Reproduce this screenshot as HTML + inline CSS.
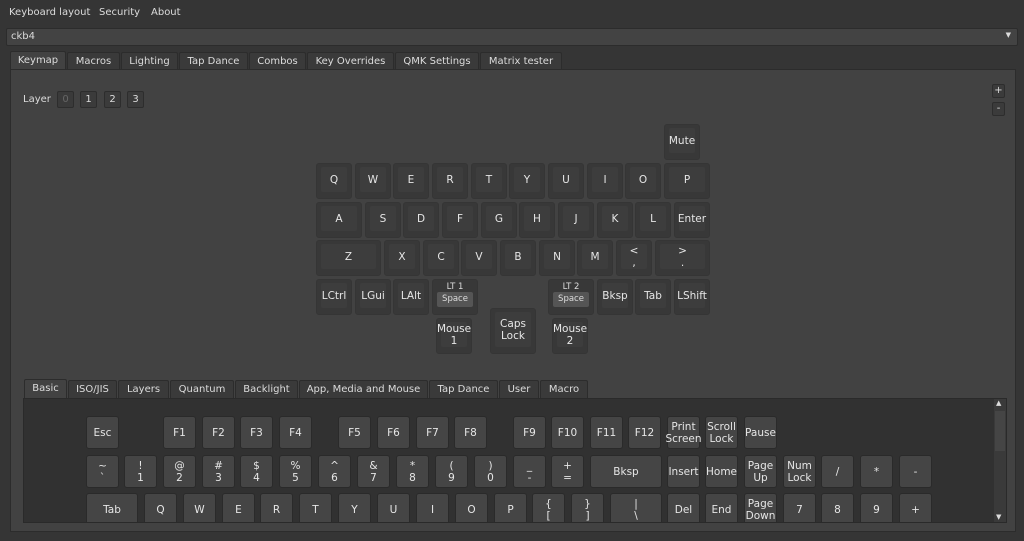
<!DOCTYPE html>
<html><head><meta charset="utf-8"><style>
*{box-sizing:border-box;margin:0;padding:0}
body{width:1024px;height:541px;background:#353535;font-family:"DejaVu Sans","Liberation Sans",sans-serif;font-size:10px;color:#dcdcdc;position:relative;overflow:hidden}
.a{position:absolute}
.menu span{position:absolute;top:7px}
.combo{left:6px;top:28px;width:1012px;height:18px;background:#434343;border:1px solid #2c2c2c;border-radius:2px;padding:2px 4px}
.tab{position:absolute;height:18px;border:1px solid #2c2c2c;border-bottom:none;background:#3a3a3a;text-align:center;line-height:17px;border-radius:2px 2px 0 0}
.tab.s{background:#424242;height:19px}
.panel{left:10px;top:69px;width:1006px;height:463px;background:#424242;border:1px solid #2c2c2c}
.k{position:absolute;background:#383838;border:1px solid #353535;border-radius:3px}
.k i{position:absolute;left:4px;right:4px;top:3px;bottom:6px;background:#3d3d3d;border-radius:2px;font-style:normal;display:flex;align-items:center;justify-content:center;text-align:center;line-height:12px;font-size:10.5px;color:#e6e6e6}
.k b{position:absolute;left:4px;right:4px;top:2px;font-weight:normal;text-align:center;font-size:8.5px}
.k u{position:absolute;left:4px;right:4px;bottom:7px;height:15px;background:#555;border-radius:2px;text-decoration:none;text-align:center;font-size:8.5px;line-height:15px}
.lb{position:absolute;top:91px;width:17px;height:17px;border:1px solid #2d2d2d;background:#3b3b3b;border-radius:2px;text-align:center;line-height:15px;font-size:10px}
.c{position:absolute;width:33px;height:33px;background:#454545;border:1px solid #2a2a2a;border-radius:3px;display:flex;align-items:center;justify-content:center;text-align:center;line-height:12px;font-size:10.5px;color:#e6e6e6}
</style></head><body>
<div class="menu"><span style="left:9px">Keyboard layout</span><span style="left:99px">Security</span><span style="left:151px">About</span></div>
<div class="a combo">ckb4<span class="a" style="right:6px;top:2px;font-size:7px">▼</span></div>
<div class="tab s" style="left:10px;top:51px;width:56px">Keymap</div>
<div class="tab" style="left:67px;top:52px;width:53px">Macros</div>
<div class="tab" style="left:121px;top:52px;width:57px">Lighting</div>
<div class="tab" style="left:179px;top:52px;width:69px">Tap Dance</div>
<div class="tab" style="left:249px;top:52px;width:57px">Combos</div>
<div class="tab" style="left:307px;top:52px;width:87px">Key Overrides</div>
<div class="tab" style="left:395px;top:52px;width:84px">QMK Settings</div>
<div class="tab" style="left:480px;top:52px;width:82px">Matrix tester</div>
<div class="a panel"></div>
<span class="a" style="left:23px;top:94px">Layer</span>
<div class="lb" style="left:57px;color:#666;background:#3a3a3a">0</div>
<div class="lb" style="left:80px">1</div>
<div class="lb" style="left:104px">2</div>
<div class="lb" style="left:127px">3</div>
<div class="lb" style="left:992px;top:84px;width:13px;height:14px;line-height:12px">+</div>
<div class="lb" style="left:992px;top:102px;width:13px;height:14px;line-height:12px">-</div>

<div class="k" style="left:664px;top:124px;width:36px;height:36px"><i>Mute</i></div>
<div class="k" style="left:316px;top:163px;width:36px;height:36px"><i>Q</i></div>
<div class="k" style="left:355px;top:163px;width:36px;height:36px"><i>W</i></div>
<div class="k" style="left:393px;top:163px;width:36px;height:36px"><i>E</i></div>
<div class="k" style="left:432px;top:163px;width:36px;height:36px"><i>R</i></div>
<div class="k" style="left:471px;top:163px;width:36px;height:36px"><i>T</i></div>
<div class="k" style="left:509px;top:163px;width:36px;height:36px"><i>Y</i></div>
<div class="k" style="left:548px;top:163px;width:36px;height:36px"><i>U</i></div>
<div class="k" style="left:587px;top:163px;width:36px;height:36px"><i>I</i></div>
<div class="k" style="left:625px;top:163px;width:36px;height:36px"><i>O</i></div>
<div class="k" style="left:664px;top:163px;width:46px;height:36px"><i>P</i></div>
<div class="k" style="left:316px;top:202px;width:46px;height:36px"><i>A</i></div>
<div class="k" style="left:365px;top:202px;width:36px;height:36px"><i>S</i></div>
<div class="k" style="left:403px;top:202px;width:36px;height:36px"><i>D</i></div>
<div class="k" style="left:442px;top:202px;width:36px;height:36px"><i>F</i></div>
<div class="k" style="left:481px;top:202px;width:36px;height:36px"><i>G</i></div>
<div class="k" style="left:519px;top:202px;width:36px;height:36px"><i>H</i></div>
<div class="k" style="left:558px;top:202px;width:36px;height:36px"><i>J</i></div>
<div class="k" style="left:597px;top:202px;width:36px;height:36px"><i>K</i></div>
<div class="k" style="left:635px;top:202px;width:36px;height:36px"><i>L</i></div>
<div class="k" style="left:674px;top:202px;width:36px;height:36px"><i>Enter</i></div>
<div class="k" style="left:316px;top:240px;width:65px;height:36px"><i>Z</i></div>
<div class="k" style="left:384px;top:240px;width:36px;height:36px"><i>X</i></div>
<div class="k" style="left:423px;top:240px;width:36px;height:36px"><i>C</i></div>
<div class="k" style="left:461px;top:240px;width:36px;height:36px"><i>V</i></div>
<div class="k" style="left:500px;top:240px;width:36px;height:36px"><i>B</i></div>
<div class="k" style="left:539px;top:240px;width:36px;height:36px"><i>N</i></div>
<div class="k" style="left:577px;top:240px;width:36px;height:36px"><i>M</i></div>
<div class="k" style="left:616px;top:240px;width:36px;height:36px"><i>&lt;<br>,</i></div>
<div class="k" style="left:655px;top:240px;width:55px;height:36px"><i>&gt;<br>.</i></div>
<div class="k" style="left:316px;top:279px;width:36px;height:36px"><i>LCtrl</i></div>
<div class="k" style="left:355px;top:279px;width:36px;height:36px"><i>LGui</i></div>
<div class="k" style="left:393px;top:279px;width:36px;height:36px"><i>LAlt</i></div>
<div class="k" style="left:432px;top:279px;width:46px;height:36px"><b>LT 1</b><u>Space</u></div>
<div class="k" style="left:548px;top:279px;width:46px;height:36px"><b>LT 2</b><u>Space</u></div>
<div class="k" style="left:597px;top:279px;width:36px;height:36px"><i>Bksp</i></div>
<div class="k" style="left:635px;top:279px;width:36px;height:36px"><i>Tab</i></div>
<div class="k" style="left:674px;top:279px;width:36px;height:36px"><i>LShift</i></div>
<div class="k" style="left:436px;top:318px;width:36px;height:36px"><i>Mouse<br>1</i></div>
<div class="k" style="left:490px;top:308px;width:46px;height:46px"><i>Caps<br>Lock</i></div>
<div class="k" style="left:552px;top:318px;width:36px;height:36px"><i>Mouse<br>2</i></div>

<div class="tab s" style="left:24px;top:379px;width:43px">Basic</div>
<div class="tab" style="left:68px;top:380px;width:49px">ISO/JIS</div>
<div class="tab" style="left:118px;top:380px;width:51px">Layers</div>
<div class="tab" style="left:170px;top:380px;width:64px">Quantum</div>
<div class="tab" style="left:235px;top:380px;width:63px">Backlight</div>
<div class="tab" style="left:299px;top:380px;width:129px">App, Media and Mouse</div>
<div class="tab" style="left:429px;top:380px;width:69px">Tap Dance</div>
<div class="tab" style="left:499px;top:380px;width:40px">User</div>
<div class="tab" style="left:540px;top:380px;width:48px">Macro</div>
<div class="a" style="left:23px;top:398px;width:984px;height:125px;background:#313131;border:1px solid #2a2a2a;overflow:hidden">
<div class="a" style="left:970px;top:0;width:12px;height:123px;background:#3a3a3a"><div class="a" style="left:1px;top:12px;width:10px;height:40px;background:#454545"></div><span class="a" style="left:2px;top:0;font-size:7px">▲</span><span class="a" style="left:2px;bottom:1px;font-size:7px">▼</span></div>
<div style="position:absolute;left:-24px;top:-398px">
<div class="c" style="left:86px;top:415px">Esc</div>
<div class="c" style="left:163px;top:415px">F1</div>
<div class="c" style="left:202px;top:415px">F2</div>
<div class="c" style="left:240px;top:415px">F3</div>
<div class="c" style="left:279px;top:415px">F4</div>
<div class="c" style="left:338px;top:415px">F5</div>
<div class="c" style="left:377px;top:415px">F6</div>
<div class="c" style="left:416px;top:415px">F7</div>
<div class="c" style="left:454px;top:415px">F8</div>
<div class="c" style="left:513px;top:415px">F9</div>
<div class="c" style="left:551px;top:415px">F10</div>
<div class="c" style="left:590px;top:415px">F11</div>
<div class="c" style="left:628px;top:415px">F12</div>
<div class="c" style="left:667px;top:415px">Print<br>Screen</div>
<div class="c" style="left:705px;top:415px">Scroll<br>Lock</div>
<div class="c" style="left:744px;top:415px">Pause</div>
<div class="c" style="left:86px;top:454px">~<br>`</div>
<div class="c" style="left:124px;top:454px">!<br>1</div>
<div class="c" style="left:163px;top:454px">@<br>2</div>
<div class="c" style="left:202px;top:454px">#<br>3</div>
<div class="c" style="left:240px;top:454px">$<br>4</div>
<div class="c" style="left:279px;top:454px">%<br>5</div>
<div class="c" style="left:318px;top:454px">^<br>6</div>
<div class="c" style="left:357px;top:454px">&amp;<br>7</div>
<div class="c" style="left:396px;top:454px">*<br>8</div>
<div class="c" style="left:435px;top:454px">(<br>9</div>
<div class="c" style="left:474px;top:454px">)<br>0</div>
<div class="c" style="left:513px;top:454px">_<br>-</div>
<div class="c" style="left:551px;top:454px">+<br>=</div>
<div class="c" style="left:590px;top:454px;width:72px">Bksp</div>
<div class="c" style="left:667px;top:454px">Insert</div>
<div class="c" style="left:705px;top:454px">Home</div>
<div class="c" style="left:744px;top:454px">Page<br>Up</div>
<div class="c" style="left:783px;top:454px">Num<br>Lock</div>
<div class="c" style="left:821px;top:454px">/</div>
<div class="c" style="left:860px;top:454px">*</div>
<div class="c" style="left:899px;top:454px">-</div>
<div class="c" style="left:86px;top:492px;width:52px">Tab</div>
<div class="c" style="left:144px;top:492px">Q</div>
<div class="c" style="left:183px;top:492px">W</div>
<div class="c" style="left:222px;top:492px">E</div>
<div class="c" style="left:260px;top:492px">R</div>
<div class="c" style="left:299px;top:492px">T</div>
<div class="c" style="left:338px;top:492px">Y</div>
<div class="c" style="left:377px;top:492px">U</div>
<div class="c" style="left:416px;top:492px">I</div>
<div class="c" style="left:455px;top:492px">O</div>
<div class="c" style="left:494px;top:492px">P</div>
<div class="c" style="left:532px;top:492px">{<br>[</div>
<div class="c" style="left:571px;top:492px">}<br>]</div>
<div class="c" style="left:610px;top:492px;width:52px">|<br>\</div>
<div class="c" style="left:667px;top:492px">Del</div>
<div class="c" style="left:705px;top:492px">End</div>
<div class="c" style="left:744px;top:492px">Page<br>Down</div>
<div class="c" style="left:783px;top:492px">7</div>
<div class="c" style="left:821px;top:492px">8</div>
<div class="c" style="left:860px;top:492px">9</div>
<div class="c" style="left:899px;top:492px">+</div>
</div></div>
</body></html>
